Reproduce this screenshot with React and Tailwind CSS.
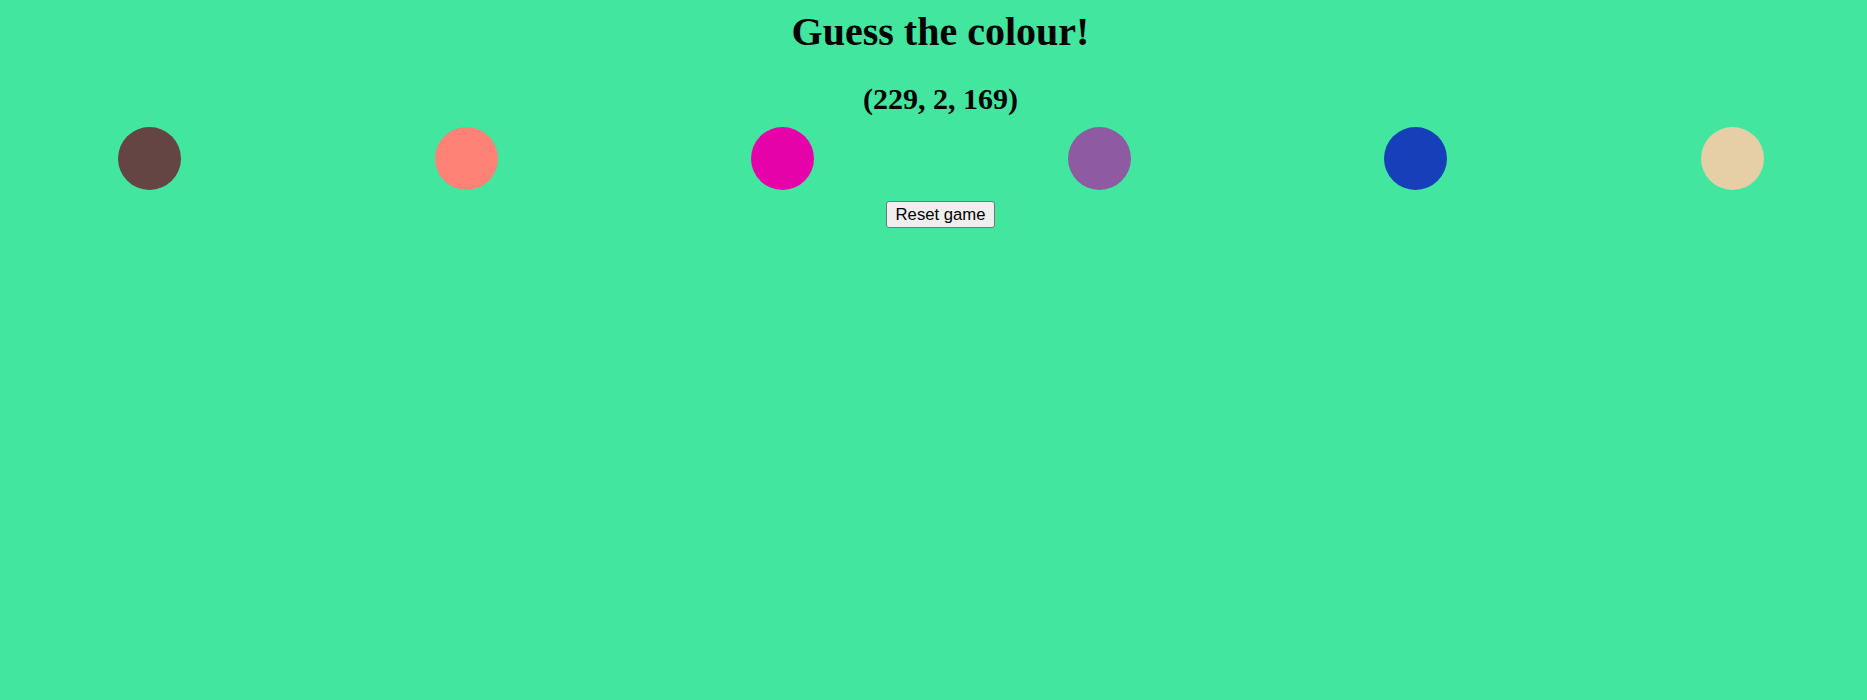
const colours = ['#654444', '#ff8277', '#e602a9', '#8e5ba3', '#163fb9', '#e6cfa7'];

export default function App() {
  return (
    <div className="min-h-[700px] w-full bg-[#42e69f] text-black" style={{ fontFamily: '"Liberation Serif", serif' }}>
      <h1 className="pl-[14px] pt-[9px] text-center text-[40px] font-bold leading-[46px]">Guess the colour!</h1>
      <h2 className="mt-[26px] pl-[14px] text-center text-[30px] font-bold leading-[35px]">(229, 2, 169)</h2>
      <div className="mt-[11px] flex justify-between pl-[118px] pr-[103px]">
        {colours.map((c) => (
          <div key={c} className="h-[63px] w-[63px] rounded-full" style={{ backgroundColor: c }} />
        ))}
      </div>
      <div className="mt-[11px] flex justify-center pl-[14px]">
        <button className="h-[27px] rounded-[3px] border border-[#767676] bg-[#efefef] px-[9px] pt-[2px] text-[16.67px] leading-none text-black" style={{ fontFamily: '"Liberation Sans", Arial, sans-serif' }}>
          Reset game
        </button>
      </div>
    </div>
  );
}
